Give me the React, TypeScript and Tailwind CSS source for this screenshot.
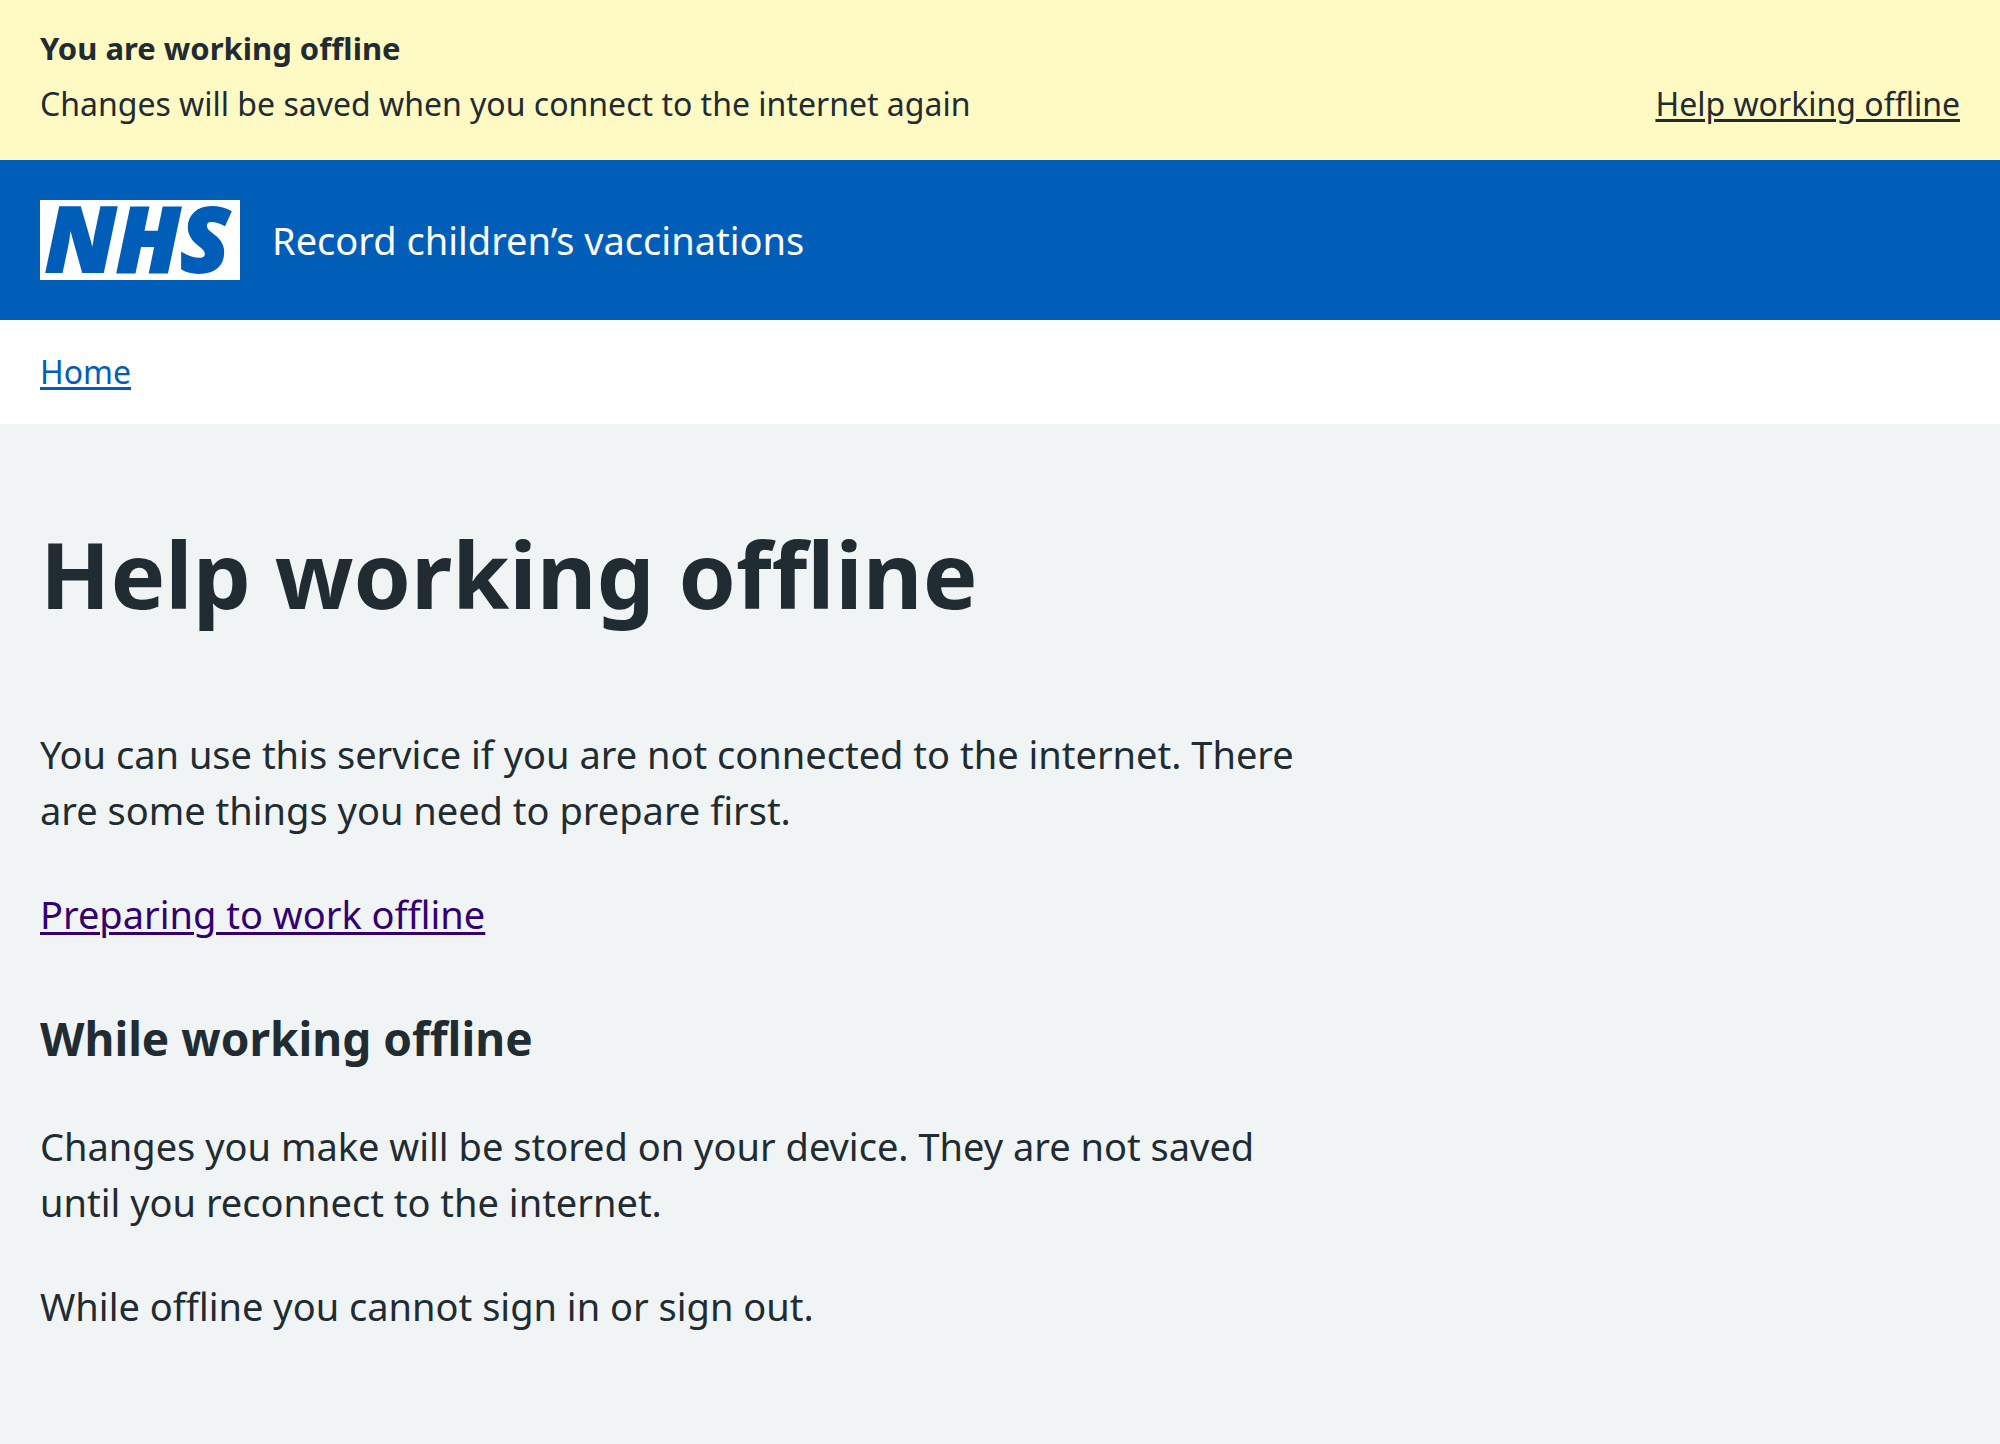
const linkUnderline = "underline decoration-[3px] underline-offset-[3px]";

function Logo() {
  return (
    <svg viewBox="0 0 200 80" className="h-20 w-[200px] shrink-0 overflow-visible" role="img" aria-label="NHS">
      <rect width="200" height="80" fill="#fff" />
      <text
        x="5"
        y="72"
        fontFamily='"Open Sans", sans-serif'
        fontWeight="800"
        fontStyle="italic"
        fontSize="90"
        fill="#005eb8"
        stroke="#005eb8"
        strokeWidth="2"
      >
        NHS
      </text>
    </svg>
  );
}

export default function App() {
  return (
    <div className='flex min-h-screen flex-col bg-[#f0f4f5] font-["Noto_Sans","Open_Sans",sans-serif] text-[#212b32]'>
      <section
        aria-label="Connection status"
        className="flex items-end justify-between gap-10 bg-[#fff9c4] px-10 pt-5 pb-7 text-[32px] leading-[56px]"
      >
        <div>
          <p className="text-[31px] font-bold">You are working offline</p>
          <p>Changes will be saved when you connect to the internet again</p>
        </div>
        <a href="#help" className={linkUnderline}>
          Help working offline
        </a>
      </section>

      <header className="flex items-center gap-8 bg-[#005eb8] p-10 text-white">
        <a href="#nhs">
          <Logo />
        </a>
        <a href="#service" className="text-[38px] leading-[56px]">
          Record children’s vaccinations
        </a>
      </header>

      <nav aria-label="Breadcrumb" className="bg-white px-10 py-6 text-[32px] leading-[56px]">
        <a href="#home" className={`text-[#005eb8] ${linkUnderline}`}>
          Home
        </a>
      </nav>

      <main className="px-10 pt-24 pb-20">
        <div className="max-w-[1280px] text-[38px] leading-[56px]">
          <h1 className="mb-[98px] text-[92px] leading-[108px] font-bold">Help working offline</h1>
          <p className="mb-12">
            You can use this service if you are not connected to the internet. There are some things you need to
            prepare first.
          </p>
          <p className="mb-16">
            <a href="#preparing" className={`text-[#330072] ${linkUnderline}`}>
              Preparing to work offline
            </a>
          </p>
          <h2 className="mb-12 text-[46px] leading-[64px] font-bold">While working offline</h2>
          <p className="mb-12">
            Changes you make will be stored on your device. They are not saved until you reconnect to the internet.
          </p>
          <p>While offline you cannot sign in or sign out.</p>
        </div>
      </main>
    </div>
  );
}
